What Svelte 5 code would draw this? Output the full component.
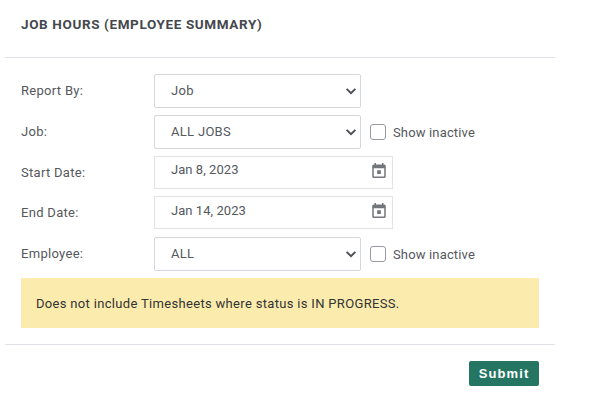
<script>
  const inactive = "Show inactive";
  const cal = "M19 4h-1V2h-2v2H8V2H6v2H5a2 2 0 0 0-2 2v14a2 2 0 0 0 2 2h14a2 2 0 0 0 2-2V6a2 2 0 0 0-2-2zm0 16H5V9h14v11zM9.500 11.500h5v5h-5z";
</script>

<div class="panel">
  <header class="head">
    <h1>JOB HOURS (EMPLOYEE SUMMARY)</h1>
  </header>

  <form class="body" on:submit|preventDefault>
    <div class="row">
      <label for="by">Report By:</label>
      <div class="select">
        <select id="by"><option>Job</option></select>
        <svg viewBox="0 0 16 16"><path d="M3 5.500l5 5 5-5" /></svg>
      </div>
    </div>

    <div class="row">
      <label for="job">Job:</label>
      <div class="select">
        <select id="job"><option>ALL JOBS</option></select>
        <svg viewBox="0 0 16 16"><path d="M3 5.500l5 5 5-5" /></svg>
      </div>
      <label class="check"><input type="checkbox" /><span>{inactive}</span></label>
    </div>

    <div class="row date-row start">
      <label for="start">Start Date:</label>
      <div class="date">
        <input id="start" type="text" value="Jan 8, 2023" />
        <svg viewBox="3 2 18 20"><path d={cal} /></svg>
      </div>
    </div>

    <div class="row date-row end">
      <label for="end">End Date:</label>
      <div class="date">
        <input id="end" type="text" value="Jan 14, 2023" />
        <svg viewBox="3 2 18 20"><path d={cal} /></svg>
      </div>
    </div>

    <div class="row">
      <label for="emp">Employee:</label>
      <div class="select">
        <select id="emp"><option>ALL</option></select>
        <svg viewBox="0 0 16 16"><path d="M3 5.500l5 5 5-5" /></svg>
      </div>
      <label class="check"><input type="checkbox" /><span>{inactive}</span></label>
    </div>

    <div class="alert">Does not include Timesheets where status is IN PROGRESS.</div>
  </form>

  <footer class="foot">
    <button type="button">Submit</button>
  </footer>
</div>

<style>
  :global(body) {
    background: #fff;
    font-family: Roboto, "Liberation Sans", sans-serif;
    color: #55585d;
  }

  .panel {
    width: 550px;
    margin-left: 5px;
    font-size: 13px;
    letter-spacing: 0.3px;
  }

  .head {
    height: 58px;
    padding: 16px 16px 0;
    box-sizing: border-box;
    border-bottom: 1px solid #e0e0e8;
  }

  h1 {
    margin: 0;
    font-size: 13.500px;
    line-height: 16px;
    font-weight: 700;
    letter-spacing: 0.62px;
    color: #45484d;
  }

  .body {
    padding: 16px 16px 16px;
    border-bottom: 1px solid #e0e0e8;
  }

  .row {
    display: flex;
    align-items: center;
    height: 34px;
    margin-bottom: 7px;
  }

  .date-row {
    height: 33px;
  }

  .end {
    margin-bottom: 8px;
  }

  .row > label:first-child {
    width: 133px;
    flex: none;
    padding-bottom: 2px;
  }

  .date-row > label:first-child {
    padding-bottom: 0;
  }

  .select {
    position: relative;
    width: 207px;
    height: 34px;
  }

  select {
    width: 100%;
    height: 100%;
    box-sizing: border-box;
    padding: 0 16px 2px;
    border: 1px solid #d5d6dc;
    border-radius: 2px;
    background: #fff;
    color: #55585d;
    font: inherit;
    letter-spacing: inherit;
    appearance: none;
    outline: none;
  }

  .select svg {
    position: absolute;
    right: 3px;
    top: 10px;
    width: 14px;
    height: 14px;
    fill: none;
    stroke: #4b4f56;
    stroke-width: 2.2;
    pointer-events: none;
  }

  .date {
    position: relative;
    width: 239px;
    height: 33px;
  }

  .date input {
    width: 100%;
    height: 100%;
    box-sizing: border-box;
    padding: 0 16px 5px;
    border: 1px solid #e2e3e6;
    background: #fff;
    color: #55585d;
    font: inherit;
    letter-spacing: 0.05px;
    outline: none;
  }

  .start .date input {
    padding-bottom: 7px;
  }

  .date svg {
    position: absolute;
    right: 7px;
    top: 7px;
    width: 14px;
    height: 15px;
    fill: #73767a;
  }

  .check {
    display: flex;
    align-items: center;
    margin-left: 9px;
    letter-spacing: 0.15px;
  }

  .check input {
    width: 16px;
    height: 16px;
    margin: 0 7px 0 0;
    border: 1px solid #97999e;
    border-radius: 3px;
    background: #fff;
    appearance: none;
  }

  .alert {
    display: flex;
    align-items: center;
    height: 50px;
    padding: 0 15px;
    background: #fbecae;
    color: #333;
    letter-spacing: 0.32px;
  }

  .foot {
    display: flex;
    justify-content: flex-end;
    padding: 16px 16px 0;
  }

  button {
    width: 70px;
    height: 25px;
    padding: 0;
    border: 0;
    border-radius: 2px;
    background: #247663;
    color: #fff;
    font-family: "Liberation Sans", sans-serif;
    font-size: 13px;
    font-weight: 700;
    letter-spacing: 1.1px;
  }
</style>
